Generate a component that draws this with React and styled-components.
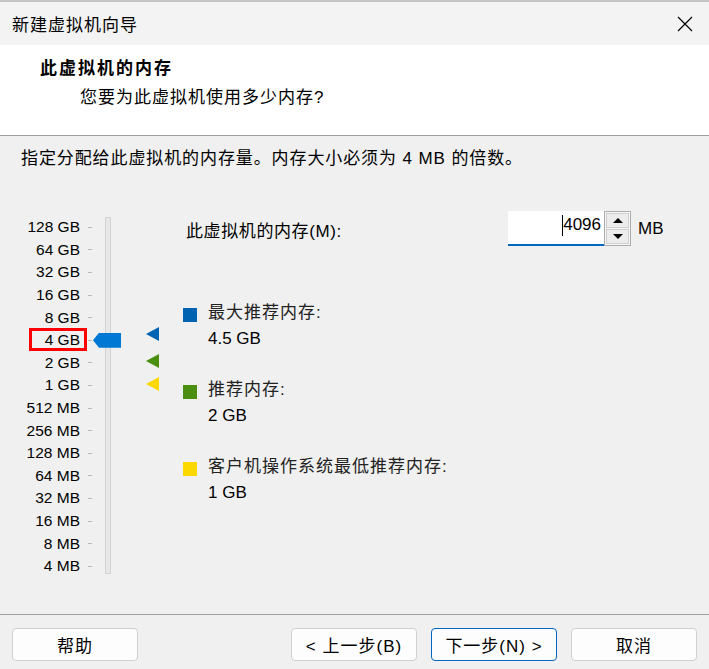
import React from 'react';
import styled, { createGlobalStyle } from 'styled-components';

const GlobalStyle = createGlobalStyle`
  html, body {
    margin: 0;
    padding: 0;
    background: #f0f0f0;
  }
  body {
    font-family: 'Liberation Sans', 'Noto Sans CJK SC', sans-serif;
    color: #000;
  }
`;

const ROW = 22.6;
const SCALE = [
  '128 GB', '64 GB', '32 GB', '16 GB', '8 GB', '4 GB', '2 GB', '1 GB',
  '512 MB', '256 MB', '128 MB', '64 MB', '32 MB', '16 MB', '8 MB', '4 MB',
];

const MARKERS = [
  { mb: 4608, color: '#0063b1' },
  { mb: 2048, color: '#4a8f0f' },
  { mb: 1024, color: '#fdd800' },
];

// centre of a value on the log2 scale, 128 GB = row 0
const rowCenter = (mb) => (17 - Math.log2(mb)) * ROW + ROW / 2;

const Window = styled.div`
  width: 709px;
  height: 669px;
  display: flex;
  flex-direction: column;
  background: #f0f0f0;
  border-top: 2px solid #c4c4c4;
  box-sizing: border-box;
  overflow: hidden;
`;

const TitleBar = styled.div`
  height: 43px;
  flex: none;
  display: flex;
  align-items: center;
  justify-content: space-between;
  padding: 0 16px 0 12px;
  background: #f3f3f3;
  font-size: 17px;
  letter-spacing: 1px;
`;

const CloseButton = styled.svg`
  width: 16px;
  height: 16px;
  display: block;
`;

const Header = styled.div`
  flex: none;
  height: 91px;
  box-sizing: border-box;
  background: #fff;
  border-bottom: 1px solid #a0a0a0;
  padding: 14px 0 0 40px;
`;

const HeaderTitle = styled.div`
  font-size: 17px;
  line-height: 20px;
  font-weight: bold;
  letter-spacing: 2px;
`;

const HeaderSub = styled.div`
  margin: 9px 0 0 40px;
  font-size: 17px;
  line-height: 20px;
  letter-spacing: 1px;
`;

const Content = styled.div`
  flex: 1;
  padding-top: 13px;
`;

const Instruction = styled.div`
  padding-left: 21px;
  font-size: 17px;
  line-height: 20px;
  letter-spacing: 0.9px;
`;

const MainRow = styled.div`
  display: flex;
  margin-top: 42px;
`;

const SliderArea = styled.div`
  position: relative;
  width: 183px;
  flex: none;
  display: flex;
  margin-top: 5px;
`;

const Scale = styled.div`
  width: 92px;
  display: flex;
  flex-direction: column;
`;

const ScaleRow = styled.div`
  height: ${ROW}px;
  display: flex;
  align-items: center;
`;

const ScaleLabel = styled.div`
  position: relative;
  flex: 1;
  text-align: right;
  font-size: 15.5px;
  line-height: 18px;
  white-space: nowrap;

  ${(p) => p.$selected && `
    &::after {
      content: '';
      position: absolute;
      left: 29px;
      right: -7px;
      top: -3px;
      bottom: -2px;
      border: 3px solid #ff0000;
    }
  `}
`;

const Tick = styled.div`
  width: 4px;
  height: 1px;
  margin-left: 8px;
  background: #b8b8b8;
`;

const Track = styled.div`
  width: 4px;
  height: 355px;
  margin: 1px 0 0 13px;
  background: #e8e8e8;
  border: 1px solid #d3d3d3;
`;

const Thumb = styled.div`
  position: absolute;
  left: 93px;
  width: 28px;
  height: 15px;
  background: #0078d4;
  clip-path: polygon(0 50%, 6px 0, 100% 0, 100% 100%, 6px 100%);
`;

const Marker = styled.div`
  position: absolute;
  left: 146px;
  width: 0;
  height: 0;
  border-top: 7px solid transparent;
  border-bottom: 7px solid transparent;
  border-right: 13px solid ${(p) => p.$color};
`;

const RightColumn = styled.div`
  flex: 1;
  display: flex;
  flex-direction: column;
`;

const MemoryRow = styled.div`
  display: flex;
  align-items: center;
  height: 35px;
  padding-left: 3px;
  font-size: 17px;
`;

const MemoryLabel = styled.div`
  width: 322px;
  padding-top: 1px;
  letter-spacing: 0.6px;
`;

const ValueBox = styled.div`
  width: 96px;
  height: 35px;
  box-sizing: border-box;
  background: #fff;
  border-bottom: 2px solid #0067c0;
  display: flex;
  justify-content: flex-end;
  align-items: flex-start;
  padding: 4px 3px 0 0;
  line-height: 20px;
`;

const Caret = styled.span`
  display: inline-block;
  width: 1px;
  height: 21px;
  background: #000;
`;

const Spinner = styled.div`
  width: 27px;
  height: 35px;
  box-sizing: border-box;
  border: 1px solid #adadad;
  padding: 1px;
  display: flex;
  flex-direction: column;
  gap: 1px;
  background: #f6f6f6;
`;

const SpinButton = styled.div`
  flex: 1;
  background: #ececec;
  border: 1px solid #cfcfcf;
  display: flex;
  align-items: center;
  justify-content: center;

  &::before {
    content: '';
    width: 0;
    height: 0;
    border-left: 5px solid transparent;
    border-right: 5px solid transparent;
    ${(p) => (p.$down ? 'border-top: 5px solid #000;' : 'border-bottom: 5px solid #000;')}
  }
`;

const Unit = styled.div`
  margin-left: 7px;
  padding-top: 1px;
`;

const Legend = styled.div`
  display: flex;
  flex-direction: column;
  gap: 31px;
  margin-top: 57px;
`;

const LegendItem = styled.div`
  display: grid;
  grid-template-columns: 14px 1fr;
  column-gap: 11px;
  row-gap: 6px;
  font-size: 17px;
  line-height: 20px;
`;

const Swatch = styled.div`
  width: 14px;
  height: 14px;
  margin-top: 5px;
  background: ${(p) => p.$color};
`;

const LegendLabel = styled.div`
  color: #222;
  letter-spacing: 1px;
`;

const LegendValue = styled.div`
  grid-column: 2;
`;

const Footer = styled.div`
  flex: none;
  border-top: 1px solid #a0a0a0;
  padding: 13px 12px 8px;
  display: flex;
  gap: 14px;
`;

const Button = styled.button`
  width: 126px;
  height: 33px;
  box-sizing: border-box;
  border: 1px solid ${(p) => (p.$primary ? '#0067c0' : '#d0d0d0')};
  border-radius: 4px;
  background: #fdfdfd;
  font-family: inherit;
  font-size: 17px;
  color: #000;
  padding: 0;
  letter-spacing: 1px;

  &:first-child {
    margin-right: auto;
  }
`;

export default function App() {
  const selected = '4 GB';
  return (
    <>
      <GlobalStyle />
      <Window>
        <TitleBar>
          <span>新建虚拟机向导</span>
          <CloseButton viewBox="0 0 16 16">
            <path d="M1 1 L15 15 M15 1 L1 15" stroke="#000" strokeWidth="1.2" fill="none" />
          </CloseButton>
        </TitleBar>

        <Header>
          <HeaderTitle>此虚拟机的内存</HeaderTitle>
          <HeaderSub>您要为此虚拟机使用多少内存?</HeaderSub>
        </Header>

        <Content>
          <Instruction>指定分配给此虚拟机的内存量。内存大小必须为 4 MB 的倍数。</Instruction>

          <MainRow>
            <SliderArea>
              <Scale>
                {SCALE.map((label) => (
                  <ScaleRow key={label}>
                    <ScaleLabel $selected={label === selected}>{label}</ScaleLabel>
                    <Tick />
                  </ScaleRow>
                ))}
              </Scale>
              <Track />
              <Thumb style={{ top: rowCenter(4096) - 7.5 }} />
              {MARKERS.map((m) => (
                <Marker key={m.mb} $color={m.color} style={{ top: rowCenter(m.mb) - 9 }} />
              ))}
            </SliderArea>

            <RightColumn>
              <MemoryRow>
                <MemoryLabel>此虚拟机的内存(M):</MemoryLabel>
                <ValueBox>
                  <Caret />
                  <span>4096</span>
                </ValueBox>
                <Spinner>
                  <SpinButton />
                  <SpinButton $down />
                </Spinner>
                <Unit>MB</Unit>
              </MemoryRow>

              <Legend>
                <LegendItem>
                  <Swatch $color="#0063b1" />
                  <LegendLabel>最大推荐内存:</LegendLabel>
                  <LegendValue>4.5 GB</LegendValue>
                </LegendItem>
                <LegendItem>
                  <Swatch $color="#4a8f0f" />
                  <LegendLabel>推荐内存:</LegendLabel>
                  <LegendValue>2 GB</LegendValue>
                </LegendItem>
                <LegendItem>
                  <Swatch $color="#fdd800" />
                  <LegendLabel>客户机操作系统最低推荐内存:</LegendLabel>
                  <LegendValue>1 GB</LegendValue>
                </LegendItem>
              </Legend>
            </RightColumn>
          </MainRow>
        </Content>

        <Footer>
          <Button>帮助</Button>
          <Button>&lt; 上一步(B)</Button>
          <Button $primary>下一步(N) &gt;</Button>
          <Button>取消</Button>
        </Footer>
      </Window>
    </>
  );
}
